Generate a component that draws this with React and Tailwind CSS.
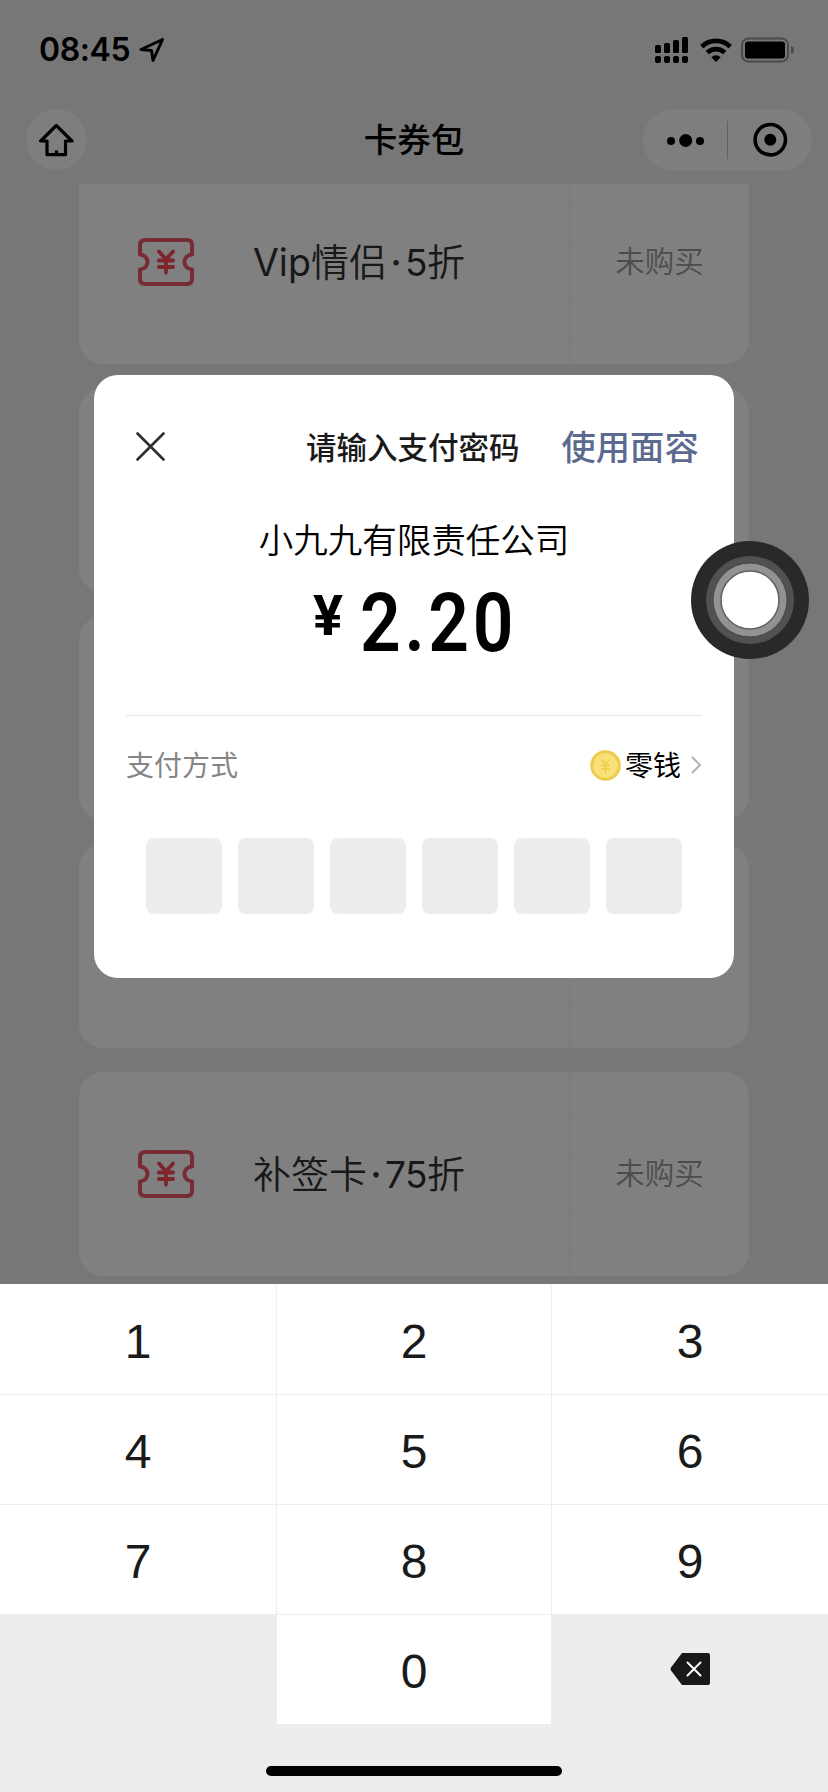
const coupons = [
  { latin: 'Vip', name: '情侣', discount: '5', status: '未购买' },
  {},
  {},
  {},
  { name: '补签卡', discount: '75', status: '未购买' },
]

const digits = ['1', '2', '3', '4', '5', '6', '7', '8', '9']

function StatusBar() {
  return (
    <div className="flex h-[98px] shrink-0 items-center justify-between pt-[2px] pl-[39px] pr-[33px]">
      <div className="flex items-center">
        <span className="w-[100px] font-['Inter'] text-[32px] leading-none font-semibold tracking-[-0.4px]">08:45</span>
        <svg width="26" height="26" viewBox="0 0 26 26" fill="none" stroke="black" strokeWidth="3" strokeLinejoin="round">
          <path d="M2 12.5 L23.5 2.5 L14 23.5 L12.5 13.5 Z" />
        </svg>
      </div>
      <div className="flex items-center">
        <svg width="34" height="28" viewBox="0 0 34 28" className="mr-[11px]">
          <rect x="0" y="9" width="6" height="8" rx="1.5" />
          <rect x="9" y="7" width="6" height="10" rx="1.5" />
          <rect x="18" y="4" width="6" height="13" rx="1.5" />
          <rect x="27" y="1" width="6" height="16" rx="1.5" />
          <rect x="0" y="20" width="6" height="7" rx="2" />
          <rect x="9" y="20" width="6" height="7" rx="2" />
          <rect x="18" y="20" width="6" height="7" rx="2" />
          <rect x="27" y="20" width="6" height="7" rx="2" />
        </svg>
        <svg width="32" height="26" viewBox="0 0 32 26" fill="none" stroke="black" strokeWidth="4.8" className="mr-[9px]">
          <path d="M1.8 9.7 A20.3 20.3 0 0 1 30.2 9.7" />
          <path d="M7.3 15.6 A12.4 12.4 0 0 1 24.7 15.6" />
          <path d="M16 25 L11.3 20.2 A6.7 6.7 0 0 1 20.7 20.2 Z" fill="black" stroke="none" />
        </svg>
        <svg width="54" height="26" viewBox="0 0 54 26">
          <rect x="1" y="1.5" width="46" height="23" rx="6.5" fill="none" stroke="#4a4a4a" strokeWidth="2" />
          <rect x="4" y="4.5" width="40" height="17" rx="3" />
          <path d="M50 9 Q53 10 53 13 Q53 16 50 17 Z" fill="#4a4a4a" />
        </svg>
      </div>
    </div>
  )
}

function NavBar() {
  return (
    <div className="flex h-[86px] shrink-0 justify-between pt-[11px] pl-4 pr-4">
      <div className="flex w-[169px] pl-[10px]">
        <div className="flex size-[61px] items-center justify-center rounded-full bg-[#7e7e7e]">
          <svg width="36" height="34" viewBox="0 0 36 34" fill="none" stroke="black" strokeWidth="3.2" strokeLinejoin="round">
            <path d="M17.3 2.5 L1.6 18 H8 V31.7 H26.5 V18 H33 Z" />
            <path d="M17.5 27.5 V31" />
          </svg>
        </div>
      </div>
      <h1 className="pt-[13px] text-[33.5px] leading-[38px] font-medium">卡券包</h1>
      <div className="flex h-[62px] w-[169px] items-center rounded-full bg-[#7e7e7e]">
        <svg width="169" height="62" viewBox="0 0 169 62">
          <circle cx="28" cy="32" r="4" />
          <circle cx="42.7" cy="31.5" r="6.5" />
          <circle cx="57" cy="32" r="4" />
          <path d="M84.5 12 V50" stroke="#606060" strokeWidth="1" />
          <circle cx="127.3" cy="30.7" r="15.2" fill="none" stroke="black" strokeWidth="3.6" />
          <circle cx="127.3" cy="30.7" r="6" />
        </svg>
      </div>
    </div>
  )
}

function CouponIcon() {
  return (
    <svg width="56" height="48" viewBox="0 0 56 48" fill="none" strokeLinecap="round" strokeLinejoin="round">
      <path
        d="M7 2 H49 Q54 2 54 7 V16.5 C44 17.5 44 30.5 54 31.5 V41 Q54 46 49 46 H7 Q2 46 2 41 V31.5 C12 30.5 12 17.5 2 16.5 V7 Q2 2 7 2 Z"
        stroke="#762c34"
        strokeWidth="4"
      />
      <path d="M21 13.5 L28 21.5 L35 13.5 M21 22.5 H35 M21 29 H35 M28 21.5 V34.5" stroke="#7c252c" strokeWidth="3.8" />
    </svg>
  )
}

function CouponCard({ latin, name, discount, status }) {
  return (
    <div className="flex h-[204px] shrink-0 rounded-[24px] bg-[#808080]">
      <div className="flex w-[491px] items-center border-r border-dashed border-[#747474] pl-[59px]">
        {name && (
          <>
            <CouponIcon />
            <p className="ml-[59px] flex h-[38px] items-baseline text-[38px] leading-[38px] font-[350] whitespace-nowrap text-[#181818]">
              {latin && <span className="font-['Inter'] text-[37.5px] font-normal">{latin}</span>}
              <span>{name}</span>
              <span className="w-[18px] text-center font-['Inter'] font-medium">·</span>
              <span className="font-['Inter'] text-[37px] font-normal tracking-[-0.5px]">{discount}</span>
              <span>折</span>
            </p>
          </>
        )}
      </div>
      <div className="flex flex-1 items-center justify-center pt-[2px] text-[29.5px] leading-none font-[350] text-[#4c4c4c]">
        {status}
      </div>
    </div>
  )
}

function PaymentDialog() {
  return (
    <div className="absolute top-[375px] left-[94px] flex h-[603px] w-[640px] flex-col rounded-[24px] bg-white">
      <div className="mt-[49px] flex h-[44px] items-center pl-[42px]">
        <svg width="29" height="29" viewBox="0 0 29 29" stroke="#2f2f2f" strokeWidth="2.6" strokeLinecap="round">
          <path d="M1.5 1.5 L27.5 27.5 M27.5 1.5 L1.5 27.5" />
        </svg>
        <h2 className="ml-[141px] pt-[6px] text-[30.5px] leading-none font-medium whitespace-nowrap text-[#1a1a1a]">
          请输入支付密码
        </h2>
        <button className="ml-[42px] pt-[5px] text-[34.3px] leading-none font-medium whitespace-nowrap text-[#5c6a90]">
          使用面容
        </button>
      </div>
      <p className="mt-[50px] text-center text-[34.5px] leading-[46px] font-[350]">小九九有限责任公司</p>
      <div className="mt-[19px] flex h-[80px] pl-[219px] font-['Roboto']">
        <span className="w-[47px] pt-[5px] text-[56px] leading-[56px] font-bold">¥</span>
        <span className="origin-left scale-x-[0.88] text-[81px] leading-[81px] font-semibold tracking-[4.2px]">2.20</span>
      </div>
      <div className="mx-8 mt-[52px] border-t border-[#e6e6e6]" />
      <div className="mx-8 mt-[27px] flex h-[44px] items-center justify-between text-[28px] leading-none">
        <span className="pt-[3px] text-[#858585]">支付方式</span>
        <div className="flex items-center">
          <svg width="31" height="31" viewBox="0 0 31 31" fill="none">
            <circle cx="15.5" cy="15.5" r="13.8" fill="#fae078" stroke="#eecb4e" strokeWidth="3" />
            <path d="M11.5 9.5 L15.5 14.5 L19.5 9.5 M11 15.5 H20 M11 18.8 H20 M15.5 14.5 V22.5" stroke="#edc63f" strokeWidth="1.2" />
          </svg>
          <span className="ml-[4px] pt-[3px]">零钱</span>
          <svg width="12" height="18" viewBox="0 0 12 18" fill="none" stroke="#b2b2b2" strokeWidth="2" className="ml-[9px]">
            <path d="M2 1 L10 9 L2 17" />
          </svg>
        </div>
      </div>
      <div className="mt-[51px] flex justify-center gap-4">
        {Array.from({ length: 6 }, (_, i) => (
          <div key={i} className="size-[76px] rounded-lg bg-[#ededed]" />
        ))}
      </div>
    </div>
  )
}

function Keypad() {
  return (
    <div className="h-[508px] shrink-0 bg-[#ededed] font-['Liberation_Sans'] text-[48px] leading-none text-[#1a1a1a]">
      <div className="grid auto-rows-[109px] grid-cols-[276px_274px_276px] gap-px border-t border-white">
        {digits.map((digit) => (
          <button key={digit} className="flex items-center justify-center bg-white pt-[5px]">
            {digit}
          </button>
        ))}
        <div />
        <button className="flex items-center justify-center bg-white pt-[5px]">0</button>
        <button className="flex items-center justify-center pb-[2px]">
          <svg width="40" height="32" viewBox="0 0 40 32">
            <path d="M12 0 H38 Q40 0 40 2 V30 Q40 32 38 32 H12 L1 17.5 Q0 16 1 14.5 Z" fill="#191919" />
            <path d="M17.5 9.5 L30.5 22.5 M30.5 9.5 L17.5 22.5" stroke="#fff" strokeWidth="2" strokeLinecap="round" />
          </svg>
        </button>
      </div>
      <div className="mx-auto mt-[42px] h-[10px] w-[296px] rounded-full bg-black" />
    </div>
  )
}

function AssistiveTouch() {
  return (
    <svg width="118" height="118" viewBox="0 0 118 118" className="absolute top-[541px] left-[691px]">
      <circle cx="59" cy="59" r="59" fill="#292929" />
      <circle cx="59" cy="59" r="44" fill="#515151" />
      <circle cx="59" cy="59" r="37" fill="#929292" stroke="#484848" strokeWidth="1" />
      <circle cx="59" cy="59" r="29" fill="#fff" stroke="#606060" strokeWidth="1.5" />
    </svg>
  )
}

export default function App() {
  return (
    <div className="relative flex h-[1792px] w-[828px] flex-col overflow-hidden bg-[#777777] font-['Roboto','Noto_Sans_CJK_SC',sans-serif] text-black">
      <StatusBar />
      <NavBar />
      <div className="flex flex-1 flex-col overflow-hidden px-[79px]">
        <div className="-mt-6 flex flex-col gap-6">
          {coupons.map((coupon, i) => (
            <CouponCard key={i} {...coupon} />
          ))}
        </div>
      </div>
      <Keypad />
      <PaymentDialog />
      <AssistiveTouch />
    </div>
  )
}
